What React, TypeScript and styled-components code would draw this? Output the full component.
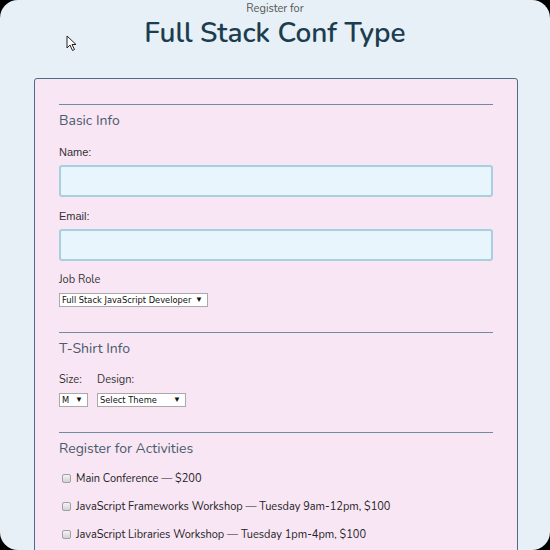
import React from "react"
import styled, { createGlobalStyle } from "styled-components"

const COLORS = {
  frame: "#000",
  page: "#e6f0f6",
  card: "#f9e6f5",
  cardBorder: "#4f6c85",
  rule: "#6f8ba1",
  title: "#1c3d4f",
  heading: "#4a5b6b",
  text: "#333",
  inputBg: "#e8f5fc",
  inputBorder: "#a6d0e0",
}

const GlobalStyle = createGlobalStyle`
  html, body {
    margin: 0;
    padding: 0;
    background: ${COLORS.frame};
  }
  * { box-sizing: border-box; }
`

const Page = styled.div`
  position: relative;
  width: 550px;
  height: 550px;
  overflow: hidden;
  border-radius: 18px;
  background: ${COLORS.page};
  font-family: Nunito, Lato, "Noto Sans", sans-serif;
  color: ${COLORS.text};
`

const Header = styled.header`
  text-align: center;
  padding-top: 2px;
  height: 78px;
`

const Kicker = styled.div`
  font-size: 11px;
  line-height: 13px;
  color: #555;
`

const Title = styled.h1`
  margin: 0;
  font-size: 28px;
  line-height: 36px;
  font-weight: 600;
  color: ${COLORS.title};
`

const Card = styled.form`
  margin: 0 32px 0 34px;
  padding: 25px 24px;
  background: ${COLORS.card};
  border: 1px solid ${COLORS.cardBorder};
  border-radius: 3px;
  min-height: 600px;
`

const Section = styled.fieldset`
  margin: 0 0 25px;
  padding: 0;
  border: none;
  border-top: 1px solid ${COLORS.rule};
  display: flex;
  flex-direction: column;
  align-items: flex-start;
`

const SectionTitle = styled.h2<{ $tight?: boolean }>`
  margin: 6px 0 ${(p) => (p.$tight ? 12 : 14)}px;
  font-size: 14px;
  line-height: 20px;
  font-weight: 400;
  color: ${COLORS.heading};
`

const Label = styled.label<{ $plain?: boolean }>`
  display: block;
  font-size: 11px;
  line-height: 14px;
  font-family: ${(p) => (p.$plain ? '"Liberation Sans", Arial, sans-serif' : 'Nunito, Lato, sans-serif')};
  color: ${COLORS.text};
  margin-bottom: 6px;
`

const TextInput = styled.input`
  display: block;
  width: 100%;
  height: 32px;
  margin: 0 0 12px;
  background: ${COLORS.inputBg};
  border: 2px solid ${COLORS.inputBorder};
  border-radius: 3px;
  outline: none;
`

const SelectWrap = styled.span<{ $width: number }>`
  position: relative;
  display: inline-block;
  width: ${(p) => p.$width}px;
  height: 14px;
  background: #fff;
  border: 1px solid #a9a9a9;

  &::after {
    content: "▼";
    position: absolute;
    right: 4px;
    top: 0;
    font-size: 8px;
    line-height: 12px;
    color: #111;
    pointer-events: none;
  }
`

const Select = styled.select`
  appearance: none;
  display: block;
  width: 100%;
  height: 12px;
  border: none;
  background: transparent;
  padding: 0 2px;
  margin: 0;
  font-family: "DejaVu Sans", Verdana, sans-serif;
  font-size: 8.3px;
  line-height: 12px;
  color: #111;
  outline: none;
`

const Row = styled.div`
  display: flex;
  gap: 9px;
`

const Column = styled.div`
  display: flex;
  flex-direction: column;
  align-items: flex-start;
`

const ActivityList = styled.div`
  display: flex;
  flex-direction: column;
  gap: 14px;
`

const Activity = styled.label`
  display: flex;
  align-items: center;
  gap: 5px;
  height: 14px;
  font-size: 11px;
  color: #222;
  padding-left: 3px;
`

const Check = styled.input`
  appearance: none;
  margin: 0;
  width: 9px;
  height: 9px;
  border: 1px solid #a0a0a0;
  border-radius: 2px;
  background: linear-gradient(#f4f4f4, #d2d2d2);
`

const Cursor = styled.svg`
  position: absolute;
  left: 66px;
  top: 35px;
`

const activities = [
  "Main Conference — $200",
  "JavaScript Frameworks Workshop — Tuesday 9am-12pm, $100",
  "JavaScript Libraries Workshop — Tuesday 1pm-4pm, $100",
]

export default function App() {
  return (
    <Page>
      <GlobalStyle />
      <Header>
        <Kicker>Register for</Kicker>
        <Title>Full Stack Conf Type</Title>
      </Header>

      <Card>
        <Section>
          <SectionTitle>Basic Info</SectionTitle>
          <Label $plain htmlFor="name">Name:</Label>
          <TextInput id="name" type="text" />
          <Label $plain htmlFor="mail">Email:</Label>
          <TextInput id="mail" type="email" />
          <Label htmlFor="title">Job Role</Label>
          <SelectWrap $width={149}>
            <Select id="title">
              <option>Full Stack JavaScript Developer</option>
            </Select>
          </SelectWrap>
        </Section>

        <Section>
          <SectionTitle>T-Shirt Info</SectionTitle>
          <Row>
            <Column>
              <Label htmlFor="size">Size:</Label>
              <SelectWrap $width={29}>
                <Select id="size">
                  <option>M</option>
                </Select>
              </SelectWrap>
            </Column>
            <Column>
              <Label htmlFor="design">Design:</Label>
              <SelectWrap $width={89}>
                <Select id="design">
                  <option>Select Theme</option>
                </Select>
              </SelectWrap>
            </Column>
          </Row>
        </Section>

        <Section>
          <SectionTitle $tight>Register for Activities</SectionTitle>
          <ActivityList>
            {activities.map((a) => (
              <Activity key={a}>
                <Check type="checkbox" />
                {a}
              </Activity>
            ))}
          </ActivityList>
        </Section>
      </Card>

      <Cursor width="12" height="17" viewBox="0 0 12 17">
        <path d="M1 1 L1 13 L4 10 L6.5 15.5 L8.5 14.5 L6 9.5 L10 9.5 Z" fill="#fff" stroke="#222" strokeWidth="1" strokeLinejoin="round" />
      </Cursor>
    </Page>
  )
}
